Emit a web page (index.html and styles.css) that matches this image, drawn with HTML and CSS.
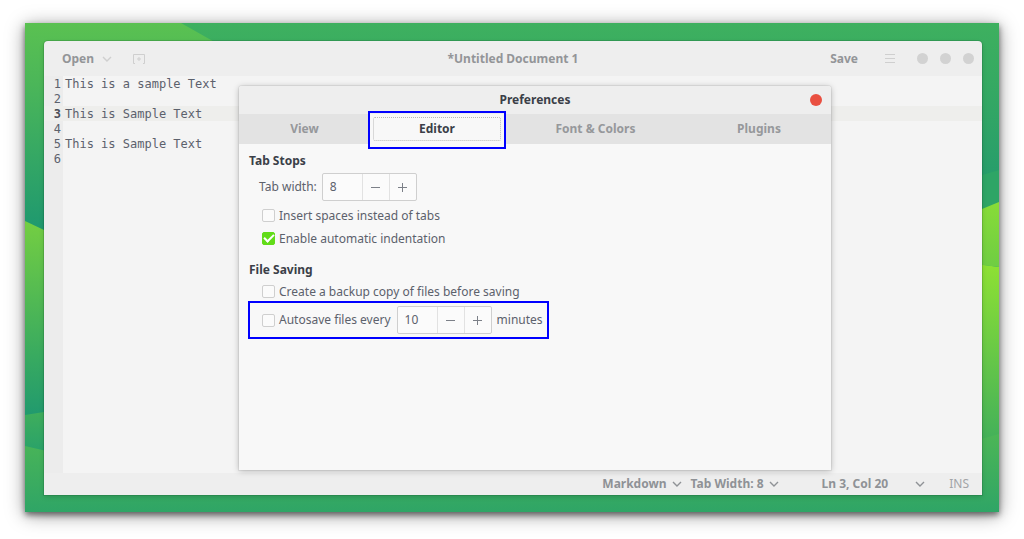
FILE: index.html
```html
<!DOCTYPE html>
<html lang="en">
<head>
<meta charset="utf-8">
<title>Untitled Document 1</title>
<link rel="stylesheet" href="styles.css">
</head>
<body>
<main class="desktop">
  <svg class="wallpaper" viewBox="0 0 974 489" preserveAspectRatio="none" aria-hidden="true">
    <defs>
      <linearGradient id="base" gradientUnits="userSpaceOnUse" x1="0" y1="0" x2="0" y2="185"><stop offset="0" stop-color="#3eb05f"/><stop offset=".3" stop-color="#36aa62"/><stop offset="1" stop-color="#22996e"/></linearGradient>
      <linearGradient id="corner" gradientUnits="userSpaceOnUse" x1="0" y1="0" x2="0" y2="205"><stop offset="0" stop-color="#5ac151"/><stop offset=".3" stop-color="#4bb659"/><stop offset="1" stop-color="#1f996f"/></linearGradient>
      <linearGradient id="left" gradientUnits="userSpaceOnUse" x1="0" y1="198" x2="0" y2="392"><stop offset="0" stop-color="#74ce42"/><stop offset=".7" stop-color="#38aa60"/><stop offset="1" stop-color="#219a6e"/></linearGradient>
      <linearGradient id="leftlow" gradientUnits="userSpaceOnUse" x1="0" y1="389" x2="0" y2="427"><stop offset="0" stop-color="#3fae5c"/><stop offset="1" stop-color="#2aa269"/></linearGradient>
      <linearGradient id="bottom" gradientUnits="userSpaceOnUse" x1="0" y1="411" x2="0" y2="489"><stop offset="0" stop-color="#4cb656"/><stop offset="1" stop-color="#2fa566"/></linearGradient>
      <linearGradient id="right" gradientUnits="userSpaceOnUse" x1="0" y1="179" x2="0" y2="244"><stop offset="0" stop-color="#88dc37"/><stop offset="1" stop-color="#6fcd43"/></linearGradient>
      <linearGradient id="rightlow" gradientUnits="userSpaceOnUse" x1="0" y1="241" x2="0" y2="415"><stop offset="0" stop-color="#8ee133"/><stop offset="1" stop-color="#44b159"/></linearGradient>
    </defs>
    <path fill="url(#base)" d="M0 0H974V489H0z"/>
    <path fill="url(#corner)" d="M0 0H156L400 138V300H0z"/>
    <path fill="#2ea566" d="M974 147L957 152V190H974z"/>
    <path fill="url(#left)" d="M0 198L400 387V489H0z"/>
    <path fill="url(#leftlow)" d="M0 392L19 389V489H0z"/>
    <path fill="url(#rightlow)" d="M974 244L700 206V489H974z"/>
    <path fill="url(#right)" d="M974 179L957 186V242L974 244z"/>
    <path fill="url(#bottom)" d="M0 423L160 460H800L974 411V489H0z"/>
  </svg>

  <section class="window">
    <header class="headerbar">
      <div class="start">
        <button class="flat open" type="button">Open
          <svg class="chevron pale" viewBox="0 0 10 6" aria-hidden="true"><path d="M1 1l4 4 4-4"/></svg>
        </button>
        <button class="flat" type="button" aria-label="New document">
          <svg class="newdoc" viewBox="0 0 12 12" aria-hidden="true"><path d="M2 10.500H.5V1.500H11.500V10.500H10M6 4v4M4 6h4"/></svg>
        </button>
      </div>
      <h1 class="title">*Untitled Document 1</h1>
      <div class="end">
        <button class="flat" type="button">Save</button>
        <button class="flat menu" type="button" aria-label="Menu">
          <svg class="burger" viewBox="0 0 10 9" aria-hidden="true"><path d="M0 .5h10M0 4.500h10M0 8.500h10"/></svg>
        </button>
        <div class="controls">
          <button class="dot" type="button" aria-label="Minimize"></button>
          <button class="dot" type="button" aria-label="Maximize"></button>
          <button class="dot" type="button" aria-label="Close"></button>
        </div>
      </div>
    </header>

    <div class="document">
      <div class="line"><span class="number">1</span><span class="code">This is a sample Text</span></div>
      <div class="line"><span class="number">2</span><span class="code"></span></div>
      <div class="line current"><span class="number">3</span><span class="code">This is Sample Text</span></div>
      <div class="line"><span class="number">4</span><span class="code"></span></div>
      <div class="line"><span class="number">5</span><span class="code">This is Sample Text</span></div>
      <div class="line"><span class="number">6</span><span class="code"></span></div>
    </div>

    <footer class="statusbar">
      <button class="flat" type="button">Markdown <svg class="chevron" viewBox="0 0 10 6" aria-hidden="true"><path d="M1 1l4 4 4-4"/></svg></button>
      <button class="flat width" type="button">Tab Width: 8 <svg class="chevron" viewBox="0 0 10 6" aria-hidden="true"><path d="M1 1l4 4 4-4"/></svg></button>
      <button class="flat position" type="button">Ln 3, Col 20 <svg class="chevron" viewBox="0 0 10 6" aria-hidden="true"><path d="M1 1l4 4 4-4"/></svg></button>
      <span class="mode">INS</span>
    </footer>

    <section class="dialog" role="dialog" aria-labelledby="dialog-title">
      <header class="dialog-header">
        <h2 class="dialog-title" id="dialog-title">Preferences</h2>
        <button class="dot close" type="button" aria-label="Close preferences"></button>
      </header>
      <nav class="tabs" role="tablist">
        <button class="tab" type="button" role="tab">View</button>
        <button class="tab active" type="button" role="tab" aria-selected="true"><span class="focus">Editor</span></button>
        <button class="tab" type="button" role="tab">Font &amp; Colors</button>
        <button class="tab" type="button" role="tab">Plugins</button>
      </nav>
      <div class="panel">
        <h3 class="group">Tab Stops</h3>
        <div class="row spin-row">
          <label class="text" for="tab-width">Tab width:</label>
          <div class="spin">
            <input class="value" id="tab-width" type="text" value="8">
            <button class="step" type="button" aria-label="Decrease tab width"><svg class="sign" viewBox="0 0 10 10" aria-hidden="true"><path d="M0 5.500h9"/></svg></button>
            <button class="step" type="button" aria-label="Increase tab width"><svg class="sign" viewBox="0 0 10 10" aria-hidden="true"><path d="M0 5.500h9M4.500 1v9"/></svg></button>
          </div>
        </div>
        <div class="row"><input class="check" type="checkbox" id="spaces"><label for="spaces">Insert spaces instead of tabs</label></div>
        <div class="row"><input class="check" type="checkbox" id="indent" checked><label for="indent">Enable automatic indentation</label></div>
        <h3 class="group second">File Saving</h3>
        <div class="row"><input class="check" type="checkbox" id="backup"><label for="backup">Create a backup copy of files before saving</label></div>
        <div class="row autosave">
          <input class="check" type="checkbox" id="autosave"><label for="autosave">Autosave files every</label>
          <div class="spin">
            <input class="value" id="minutes" type="text" value="10" aria-labelledby="minutes-unit">
            <button class="step" type="button" aria-label="Decrease minutes"><svg class="sign" viewBox="0 0 10 10" aria-hidden="true"><path d="M0 5.500h9"/></svg></button>
            <button class="step" type="button" aria-label="Increase minutes"><svg class="sign" viewBox="0 0 10 10" aria-hidden="true"><path d="M0 5.500h9M4.500 1v9"/></svg></button>
          </div>
          <label class="unit" id="minutes-unit" for="minutes">minutes</label>
        </div>
      </div>
    </section>
  </section>
</main>
</body>
</html>
```
FILE: styles.css
```css
* { box-sizing: border-box; }

body {
  margin: 0;
  min-height: 100vh;
  display: flex;
  padding: 23px 25px 27px;
  background: #fff;
  color: #5c616c;
  font: 12px/16px "Noto Sans", "Open Sans", sans-serif;
}

button, input { font: inherit; color: inherit; margin: 0; padding: 0; border: 0; }
h1, h2, h3 { margin: 0; font-size: 12px; line-height: 16px; }
svg { display: block; fill: none; stroke: currentColor; }

.desktop {
  position: relative;
  flex: 1;
  display: flex;
  padding: 18px 17px 17px 19px;
  box-shadow: 0 3px 6px rgba(0, 0, 0, .5), 0 3px 18px rgba(0, 0, 0, .4);
}
.wallpaper { position: absolute; inset: 0; width: 100%; height: 100%; stroke: none; }

.window {
  position: relative;
  flex: 1;
  display: flex;
  flex-direction: column;
  border-radius: 4px 4px 0 0;
  background: #eee;
  box-shadow: 0 0 0 1px rgba(0, 60, 30, .15), 0 2px 5px rgba(0, 0, 0, .15);
}

.headerbar {
  display: grid;
  grid-template-columns: 1fr auto 1fr;
  align-items: center;
  height: 35px;
  padding: 0 8px;
  color: #939598;
}
.start, .end { display: flex; align-items: center; }
.start { gap: 21px; padding-left: 10px; }
.end { justify-content: flex-end; }
.flat { display: flex; align-items: center; background: none; font-weight: 700; }
.open { gap: 8px; }
.menu { margin: 0 22px 0 27px; }
.chevron { width: 10px; height: 6px; stroke-width: 1.4; }
.pale, .newdoc, .burger { color: #cfcfcf; }
.newdoc { width: 12px; height: 12px; }
.burger { width: 10px; height: 9px; }
.controls { display: flex; gap: 12px; }
.dot { width: 11px; height: 11px; border-radius: 50%; background: #d2d2d2; }

.document {
  flex: 1;
  background: linear-gradient(90deg, #ececec 19px, #f4f4f4 19px);
  font: 12px/17px "DejaVu Sans Mono", monospace;
}
.line { display: flex; height: 15px; }
.number { width: 17px; margin-right: 4px; text-align: right; }
.current { background: #eeeeec; }
.current .number { font-weight: 700; color: #4b4f58; }

.statusbar {
  display: flex;
  align-items: center;
  justify-content: flex-end;
  height: 22px;
  padding-right: 13px;
  color: #8f9296;
}
.statusbar .flat { gap: 5px; }
.statusbar .width { margin-left: 9px; }
.statusbar .position { gap: 27px; margin: 0 24px 0 43px; }
.mode { color: #a2a4a7; }

.dialog {
  position: absolute;
  inset: 45px 151px 25px 195px;
  display: flex;
  flex-direction: column;
  border-radius: 3px 3px 0 0;
  background: #f8f8f8;
  box-shadow: 0 0 0 1px rgba(0, 0, 0, .05), 0 1px 6px rgba(0, 0, 0, .25);
}
.dialog-header {
  display: grid;
  grid-template-columns: 1fr auto 1fr;
  align-items: center;
  height: 28px;
  padding: 0 9px;
  border-radius: 3px 3px 0 0;
  background: #eee;
}
.dialog-title { grid-column: 2; color: #3b3f48; }
.close { justify-self: end; width: 12px; height: 12px; background: #e94f40; }

.tabs {
  display: grid;
  grid-template-columns: 131fr 134fr 183fr 144fr;
  height: 30px;
  background: #e3e3e3;
}
.tab { background: none; color: #96989b; font-weight: 700; }
.active { position: relative; display: flex; padding: 3px; background: #f8f8f8; color: #3b3f48; }
.active::after { content: ""; position: absolute; inset: -3px -2px -5px; border: 2px solid #00f; }
.focus { flex: 1; border: 1px dotted #b8b8b8; border-radius: 2px; line-height: 22px; }

.panel { padding: 9px 9px 0; }
.group { margin: 0 1px; color: #3b3f48; }
.second { margin-top: 12px; margin-bottom: 2px; }
.row { display: flex; align-items: center; height: 23px; padding-left: 14px; }
.spin-row { height: 28px; margin: 4px 0 3px; gap: 5px; padding-left: 11px; }
.check {
  appearance: none;
  display: grid;
  place-items: center;
  width: 13px;
  height: 13px;
  margin-right: 4px;
  border: 1px solid #cfcfcf;
  border-radius: 2px;
  background: #fbfbfb;
}
.check:checked { border-color: #62dc18; background: #62dc18; }
.check:checked::before {
  content: "";
  width: 8px;
  height: 4px;
  margin-bottom: 3px;
  border: solid #fff;
  border-width: 0 0 2px 2px;
  rotate: -45deg;
}
.spin {
  display: flex;
  width: 95px;
  height: 28px;
  border: 1px solid #cfcfcf;
  border-radius: 2px;
  background: #fbfbfb;
}
.value { flex: 1; min-width: 0; padding-left: 7px; background: none; }
.step {
  display: flex;
  align-items: center;
  justify-content: center;
  width: 27px;
  border-left: 1px solid #e2e2e2;
  background: none;
}
.sign { width: 10px; height: 10px; color: #7c8088; }
.autosave {
  width: fit-content;
  height: 38px;
  margin-top: -2px;
  padding: 0 4px 0 12px;
  border: 2px solid #00f;
}
.autosave .spin { margin: 0 5px 0 6px; }
```
